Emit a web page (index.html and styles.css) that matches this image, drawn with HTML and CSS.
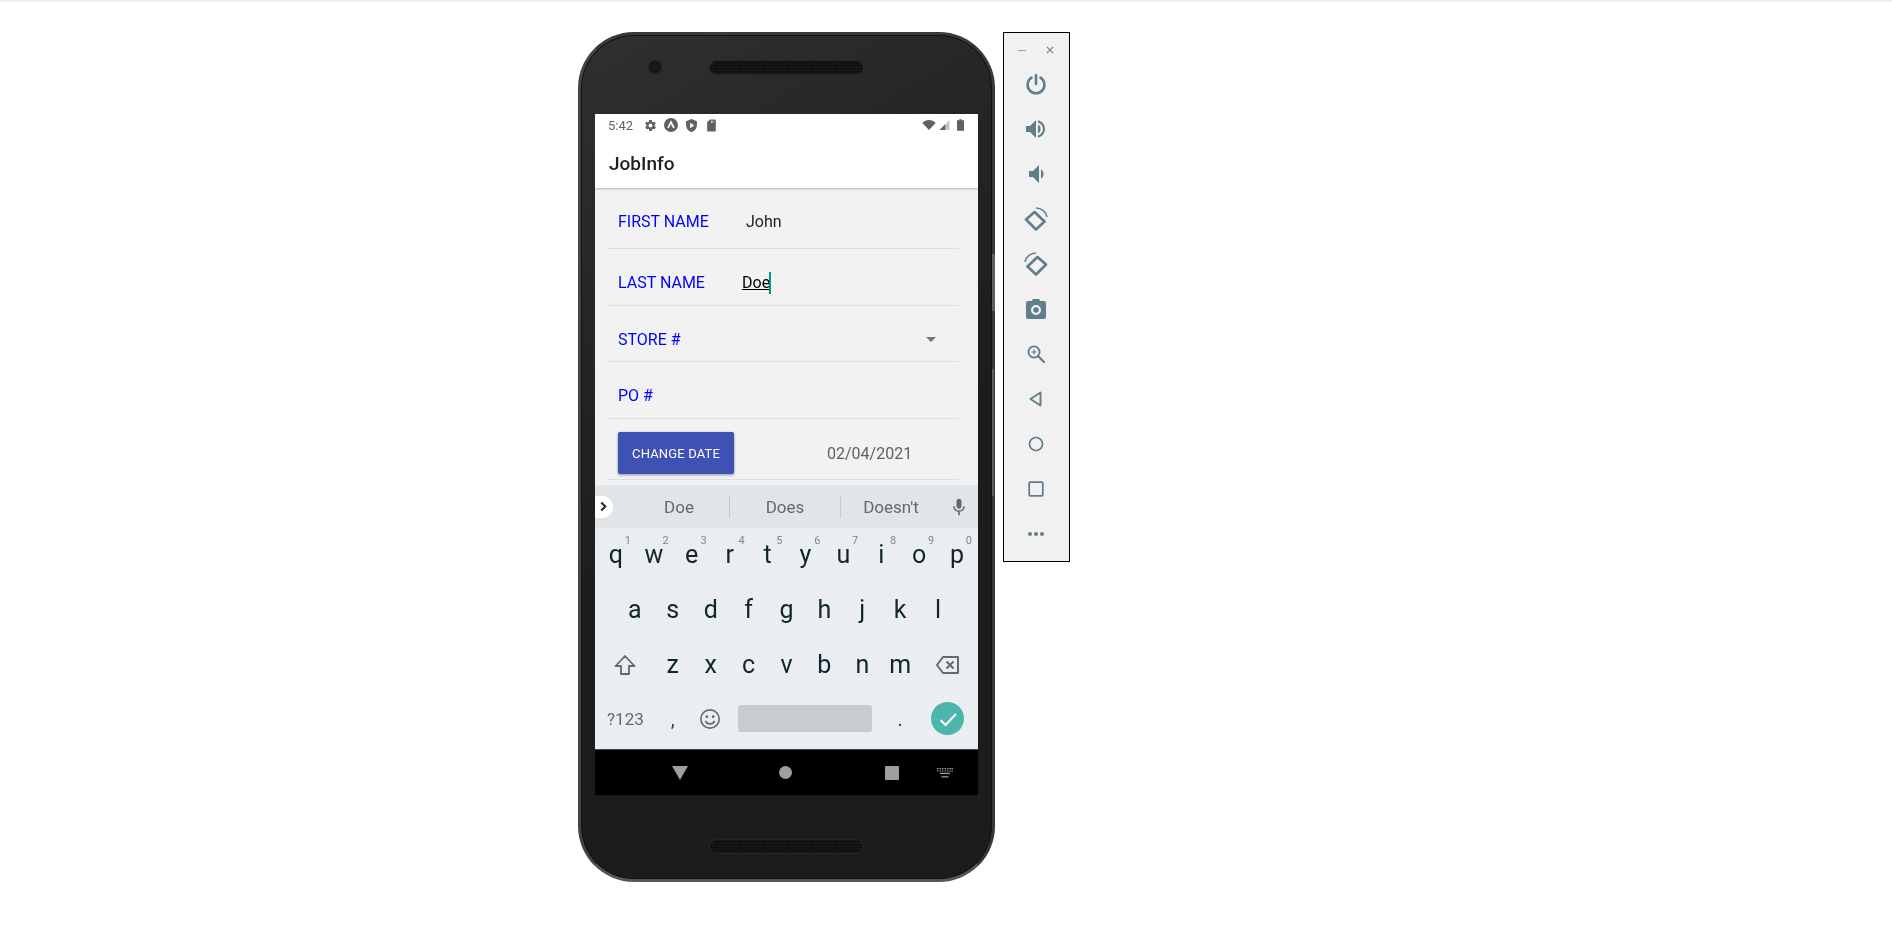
FILE: index.html
```html
<!DOCTYPE html>
<html lang="en">
<head>
  <meta charset="UTF-8">
  <title>JobInfo</title>
  <link rel="stylesheet" href="styles.css">
</head>
<body>

<div class="stage">

  <!-- PHONE -->
  <div class="phone">
    <span class="side-btn side-power"></span>
    <span class="side-btn side-volume"></span>
    <span class="camera"></span>
    <span class="speaker speaker-top"></span>
    <span class="speaker speaker-bottom"></span>

    <div class="screen">
      <div class="statusbar">
        <span class="clock">5:42</span>
        <svg class="st-icon" viewBox="0 0 24 24"><path fill="#616161" d="M19.4 13c0-.3.1-.6.1-1s0-.7-.1-1l2.1-1.6c.2-.2.2-.4.1-.6l-2-3.5c-.1-.2-.4-.3-.6-.2l-2.5 1c-.5-.4-1.1-.7-1.7-1l-.4-2.6c0-.3-.2-.5-.5-.5h-4c-.3 0-.5.2-.5.5l-.4 2.6c-.6.3-1.2.6-1.7 1l-2.5-1c-.2-.1-.5 0-.6.2l-2 3.5c-.1.2-.1.5.1.6L4.6 11c0 .3-.1.7-.1 1s0 .7.1 1l-2.1 1.6c-.2.2-.2.4-.1.6l2 3.5c.1.2.4.3.6.2l2.5-1c.5.4 1.1.7 1.7 1l.4 2.6c0 .3.2.5.5.5h4c.3 0 .5-.2.5-.5l.4-2.6c.6-.3 1.2-.6 1.7-1l2.5 1c.2.1.5 0 .6-.2l2-3.5c.1-.2.1-.5-.1-.6zM12 15.5a3.500 3.500 0 1 1 0-7 3.500 3.500 0 0 1 0 7z"/></svg>
        <svg class="st-icon st-round" viewBox="0 0 24 24"><circle cx="12" cy="12" r="12" fill="#616161"/><path fill="none" stroke="#fff" stroke-width="3" d="M7 17l5-10 5 10"/></svg>
        <svg class="st-icon" viewBox="0 0 24 24"><path fill="#616161" d="M12 0L2 4v7c0 6 4.200 11.500 10 13 5.800-1.500 10-7 10-13V4z"/><path fill="#fff" d="M9.500 7l7.500 5-7.500 5z"/></svg>
        <svg class="st-icon" viewBox="0 0 24 24"><path fill="#616161" d="M9 1h9c1.100 0 2 .9 2 2v18c0 1.100-.9 2-2 2H6c-1.100 0-2-.9-2-2V6z"/><path fill="#fff" d="M11 3h1.500v4H11zM14 3h1.500v4H14z"/></svg>
        <span class="status-gap"></span>
        <svg class="st-wifi" viewBox="0 0 16 12"><path fill="#616161" d="M0 3.500C2 1.500 5 0 8 0s6 1.500 8 3.500L8 12z"/></svg>
        <svg class="st-signal" viewBox="0 0 12 12"><path fill="#c4c4c4" d="M12 0v12H0z"/><path fill="#616161" d="M7 5v7H0z"/></svg>
        <svg class="st-battery" viewBox="0 0 8 13"><path fill="#616161" d="M2.500 0h3v1.200H8V13H0V1.200h2.500z"/></svg>
      </div>

      <div class="appbar">JobInfo</div>

      <div class="form">
        <div class="row row-first">
          <span class="label">FIRST NAME</span>
          <span class="value">John</span>
        </div>
        <div class="row row-last">
          <span class="label">LAST NAME</span>
          <span class="value value-edit"><u>Doe</u><i class="caret"></i></span>
        </div>
        <div class="row row-store">
          <span class="label">STORE #</span>
          <span class="dropdown"></span>
        </div>
        <div class="row row-po">
          <span class="label">PO #</span>
        </div>
        <div class="row row-date">
          <button class="date-btn">CHANGE DATE</button>
          <span class="date-value">02/04/2021</span>
        </div>
      </div>

      <div class="suggest">
        <span class="expand">
          <svg viewBox="0 0 10 12"><path fill="none" stroke="#263238" stroke-width="2.400" d="M2.500 1.500L7 6l-4.500 4.500"/></svg>
        </span>
        <span class="word word-1">Doe</span>
        <span class="word word-2">Does</span>
        <span class="word word-3">Doesn't</span>
        <svg class="mic" viewBox="0 0 24 24"><path fill="#5f6b71" d="M12 14c1.700 0 3-1.300 3-3V5c0-1.700-1.300-3-3-3S9 3.300 9 5v6c0 1.700 1.300 3 3 3zm5.300-3c0 3-2.500 5.100-5.300 5.100S6.700 14 6.700 11H5c0 3.400 2.700 6.200 6 6.700V22h2v-4.300c3.300-.5 6-3.300 6-6.700z"/></svg>
      </div>

      <div class="keys">
        <span class="key">q<sup>1</sup></span>
        <span class="key">w<sup>2</sup></span>
        <span class="key">e<sup>3</sup></span>
        <span class="key">r<sup>4</sup></span>
        <span class="key">t<sup>5</sup></span>
        <span class="key">y<sup>6</sup></span>
        <span class="key">u<sup>7</sup></span>
        <span class="key">i<sup>8</sup></span>
        <span class="key">o<sup>9</sup></span>
        <span class="key">p<sup>0</sup></span>

        <span class="key key-offset">a</span>
        <span class="key">s</span>
        <span class="key">d</span>
        <span class="key">f</span>
        <span class="key">g</span>
        <span class="key">h</span>
        <span class="key">j</span>
        <span class="key">k</span>
        <span class="key">l</span>

        <span class="key key-wide">
          <svg class="shift" viewBox="0 0 24 24"><path fill="none" stroke="#5f6b71" stroke-width="1.800" stroke-linejoin="round" d="M12 3L2.500 13H8v8h8v-8h5.500z"/></svg>
        </span>
        <span class="key">z</span>
        <span class="key">x</span>
        <span class="key">c</span>
        <span class="key">v</span>
        <span class="key">b</span>
        <span class="key">n</span>
        <span class="key">m</span>
        <span class="key key-wide">
          <svg class="backspace" viewBox="0 0 24 20"><path fill="none" stroke="#5f6b71" stroke-width="2" stroke-linejoin="round" d="M7 2h15v16H7l-6-8z"/><path fill="none" stroke="#5f6b71" stroke-width="2" d="M10.500 6.500l7 7m0-7l-7 7"/></svg>
        </span>

        <span class="key key-wide key-sym">?123</span>
        <span class="key key-comma">,</span>
        <span class="key key-emoji">
          <svg class="emoji" viewBox="0 0 24 24"><circle cx="12" cy="12" r="10" fill="none" stroke="#5f6b71" stroke-width="1.800"/><circle cx="8.500" cy="9.500" r="1.500" fill="#5f6b71"/><circle cx="15.500" cy="9.500" r="1.500" fill="#5f6b71"/><path fill="none" stroke="#5f6b71" stroke-width="1.800" d="M7 14c1 2.200 3 3.300 5 3.300s4-1.100 5-3.300"/></svg>
        </span>
        <span class="key key-space"><i></i></span>
        <span class="key key-dot">.</span>
        <span class="key key-wide key-enter">
          <span class="enter">
            <svg viewBox="0 0 24 24"><path fill="none" stroke="#fff" stroke-width="2" d="M4.500 13l5 5L20 7"/></svg>
          </span>
        </span>
      </div>

      <div class="navbar">
        <svg class="nav-back" viewBox="0 0 16 14"><path fill="#9e9e9e" d="M0 0h16L8 14z"/></svg>
        <span class="nav-home"></span>
        <span class="nav-recent"></span>
        <svg class="nav-kbd" viewBox="0 0 16 10"><path fill="#9e9e9e" d="M0 0h1.500v1.200H0zM2.500 0H4v1.200H2.500zM5 0h1.500v1.200H5zM7.500 0H9v1.200H7.500zM10 0h1.500v1.200H10zM12.500 0H14v1.200h-1.500zM14.500 0H16v1.200h-1.500zM0 2.400h1.500v1.200H0zM2.500 2.400H4v1.200H2.500zM5 2.400h1.500v1.200H5zM7.500 2.400H9v1.200H7.500zM10 2.400h1.500v1.200H10zM12.500 2.400H14v1.200h-1.500zM14.500 2.400H16v1.200h-1.500zM3 4.800h10V6H3zM4.500 8.200h7v1.300h-7z"/></svg>
      </div>
    </div>
  </div>

  <!-- EMULATOR TOOLBAR -->
  <div class="toolbar">
    <div class="win-controls">
      <span class="win-min"></span>
      <svg class="win-close" viewBox="0 0 8 8"><path fill="none" stroke="#6f8791" stroke-width="1.200" d="M.8.800l6.400 6.400m0-6.400L.8 7.200"/></svg>
    </div>
    <svg class="tool" viewBox="0 0 24 24"><path fill="none" stroke="#607d8b" stroke-width="2.600" stroke-linecap="round" d="M12 3v9M7.500 5.700a8.400 8.400 0 1 0 9 0"/></svg>
    <svg class="tool" viewBox="0 0 24 24"><path fill="#607d8b" d="M2 9v6h4l6 6V3L6 9zM14 7.500v9c1.500-.8 2.500-2.500 2.500-4.500S15.500 8.300 14 7.500z"/><path fill="#607d8b" d="M14 3.300v2.100c2.900.9 5 3.500 5 6.600s-2.100 5.700-5 6.600v2.100c4-.9 7-4.500 7-8.700s-3-7.800-7-8.700z"/></svg>
    <svg class="tool" viewBox="0 0 24 24"><path fill="#607d8b" d="M5 9v6h4l6 6V3L9 9zM17 7.500v9c1.500-.8 2.500-2.500 2.500-4.500S18.500 8.300 17 7.500z"/></svg>
    <svg class="tool" viewBox="0 0 24 24"><path fill="none" stroke="#607d8b" stroke-width="2.600" stroke-linejoin="round" d="M2 12.500L10.500 5l10 9.500-8.500 8z"/><path fill="none" stroke="#607d8b" stroke-width="1.500" d="M12 1c5 0 10 3.500 11 9"/></svg>
    <svg class="tool" viewBox="0 0 24 24"><path fill="none" stroke="#607d8b" stroke-width="2.600" stroke-linejoin="round" d="M22 12.500L13.500 5l-10 9.500 8.500 8z"/><path fill="none" stroke="#607d8b" stroke-width="1.500" d="M12 1C7 1 2 4.500 1 10"/></svg>
    <svg class="tool" viewBox="0 0 24 24"><path fill="#607d8b" fill-rule="evenodd" d="M9 2L7.800 4H4C2.900 4 2 4.900 2 6v14c0 1.100.9 2 2 2h16c1.100 0 2-.9 2-2V6c0-1.100-.9-2-2-2h-3.800L15 2zM12 8a5 5 0 1 1 0 10 5 5 0 0 1 0-10zm0 2.200a2.800 2.800 0 1 0 0 5.600 2.800 2.800 0 0 0 0-5.600z"/></svg>
    <svg class="tool" viewBox="0 0 24 24"><circle cx="10" cy="10" r="5.600" fill="none" stroke="#607d8b" stroke-width="1.800"/><path fill="none" stroke="#607d8b" stroke-width="2.200" stroke-linecap="round" d="M14.500 14.500l5.500 5.500"/><path fill="none" stroke="#607d8b" stroke-width="1.200" d="M10 7.500v5M7.500 10h5"/></svg>
    <svg class="tool" viewBox="0 0 24 24"><path fill="none" stroke="#607d8b" stroke-width="1.900" stroke-linejoin="round" d="M16.500 5.500v13L6.500 12z"/></svg>
    <svg class="tool" viewBox="0 0 24 24"><circle cx="12" cy="12" r="6.500" fill="none" stroke="#607d8b" stroke-width="1.700"/></svg>
    <svg class="tool" viewBox="0 0 24 24"><rect x="5.200" y="5.200" width="13.600" height="13.600" rx="1" fill="none" stroke="#607d8b" stroke-width="1.700"/></svg>
    <svg class="tool" viewBox="0 0 24 24"><circle cx="6" cy="12" r="2" fill="#607d8b"/><circle cx="12" cy="12" r="2" fill="#607d8b"/><circle cx="18" cy="12" r="2" fill="#607d8b"/></svg>
  </div>

</div>

</body>
</html>
```

FILE: styles.css
```css
* {
    box-sizing: border-box;
}

html, body {
    margin: 0;
    height: 100%;
    background-color: #fff;
    overflow: hidden;
}

body {
    font-family: Roboto, "Liberation Sans", sans-serif;
    border-top: 2px solid #efefef;
}

.stage {
    display: flex;
    align-items: flex-start;
    gap: 8px;
    padding: 30px 0 0 578px;
}

/* phone body */
.phone {
    position: relative;
    flex: none;
    width: 417px;
    height: 850px;
    padding: 79px 14px 0 14px;
    border-radius: 56px;
    border: 3px solid #444;
    border-top-color: #3a3a3a;
    border-right-color: #383838;
    border-bottom-color: #555;
    background: linear-gradient(150deg, #303030 0%, #262626 25%, #1c1c1c 55%);
    box-shadow: inset 0 0 0 1px #111;
}

.side-btn {
    position: absolute;
    left: 100%;
    background-color: #5f5f5f;
}

.side-power {
    top: 219px;
    width: 3px;
    height: 57px;
}

.side-volume {
    top: 334px;
    width: 2px;
    height: 127px;
}

.camera {
    position: absolute;
    left: 67px;
    top: 25px;
    width: 14px;
    height: 14px;
    border-radius: 50%;
    background: radial-gradient(circle, #1c1c26 0%, #131316 50%, #2a2a2a 80%);
}

.speaker {
    position: absolute;
    left: 129px;
    width: 153px;
    height: 13px;
    border-radius: 7px;
    background-color: #161616;
    background-image: radial-gradient(circle, #080808 40%, transparent 50%);
    background-size: 3px 3px;
    box-shadow: 0 0 0 1px #262626;
}

.speaker-top {
    top: 26px;
}

.speaker-bottom {
    bottom: 26px;
}

/* screen */
.screen {
    display: flex;
    flex-direction: column;
    width: 383px;
    height: 681px;
    background-color: #f2f2f2;
    overflow: hidden;
    filter: blur(0.35px);
}

.statusbar {
    position: relative;
    z-index: 1;
    display: flex;
    align-items: center;
    flex: none;
    height: 22px;
    padding: 0 14px 0 13px;
    background-color: #fff;
    font-size: 13px;
    color: #616161;
}

.clock {
    width: 33px;
    margin-right: 3px;
}

.st-icon {
    width: 13px;
    height: 13px;
    margin-right: 7px;
}

.st-round {
    width: 14px;
    height: 14px;
}

.status-gap {
    flex: 1;
}

.st-wifi {
    width: 14px;
    height: 10px;
}

.st-signal {
    width: 11px;
    height: 10px;
    margin-left: 3px;
}

.st-battery {
    width: 7px;
    height: 12px;
    margin-left: 7px;
}

.appbar {
    position: relative;
    flex: none;
    height: 52px;
    padding: 10px 0 0 14px;
    background-color: #fff;
    font-size: 19px;
    font-weight: 500;
    line-height: 36px;
    color: #212121;
    box-shadow: 0 1px 2px rgba(0, 0, 0, 0.25);
}

/* form */
.form {
    flex: 1;
    padding: 0 19px 0 13px;
}

.row {
    display: flex;
    align-items: center;
    padding-left: 10px;
    border-bottom: 1px solid #dedede;
    font-size: 16px;
}

.row-first {
    height: 61px;
    padding-top: 6px;
}

.row-last {
    height: 57px;
    padding-top: 11px;
}

.row-store {
    height: 56px;
    padding-top: 11px;
}

.row-po {
    height: 57px;
    padding-top: 10px;
}

.row-date {
    height: 61px;
    padding-top: 8px;
}

.label {
    color: #0000ff;
    white-space: nowrap;
}

.row-first .label {
    width: 128px;
}

.row-last .label {
    width: 124px;
}

.value {
    color: #212121;
}

.value-edit {
    display: flex;
    align-items: center;
    color: #000;
}

.caret {
    width: 2px;
    height: 22px;
    margin-left: -1px;
    background-color: #009688;
}

.dropdown {
    width: 0;
    height: 0;
    margin-left: auto;
    margin-right: 23px;
    border-left: 5px solid transparent;
    border-right: 5px solid transparent;
    border-top: 5px solid #757575;
}

.date-btn {
    width: 116px;
    height: 42px;
    padding: 0;
    border: none;
    border-radius: 2px;
    background-color: #3f51b5;
    color: #fff;
    font-family: inherit;
    font-size: 13px;
    letter-spacing: 0.15px;
    box-shadow: 0 1px 3px rgba(0, 0, 0, 0.4);
}

.date-value {
    margin-left: 93px;
    color: #616161;
}

/* keyboard */
.suggest {
    display: flex;
    align-items: center;
    flex: none;
    height: 43px;
    background-color: #e2e5e8;
    font-size: 17px;
    color: #5f6b71;
}

.expand {
    display: flex;
    align-items: center;
    justify-content: flex-end;
    width: 18px;
    height: 22px;
    padding-right: 5px;
    border-radius: 0 11px 11px 0;
    background-color: #fff;
    margin-right: 16px;
}

.expand svg {
    width: 9px;
    height: 11px;
}

.word {
    text-align: center;
    line-height: 22px;
}

.word-1 {
    width: 100px;
}

.word-2 {
    width: 112px;
    border-left: 1px solid #c4c8cb;
    border-right: 1px solid #c4c8cb;
}

.word-3 {
    width: 100px;
}

.mic {
    width: 20px;
    height: 20px;
    margin-left: 8px;
}

.keys {
    display: grid;
    flex: none;
    grid-template-columns: repeat(20, 1fr);
    grid-template-rows: 55px 55px 55px 53px;
    height: 222px;
    padding: 0 2px;
    background-color: #ebeef1;
    font-size: 25px;
    color: #10252e;
    border-bottom: 1px solid #41464a;
}

.key {
    position: relative;
    display: flex;
    align-items: center;
    justify-content: center;
    grid-column: span 2;
    padding-bottom: 2px;
}

.key sup {
    position: absolute;
    top: 6px;
    right: 4px;
    font-size: 11px;
    line-height: 13px;
    color: #7d878c;
}

.key-offset {
    grid-column: 2 / span 2;
}

.key-wide {
    grid-column: span 3;
}

.key-sym {
    font-size: 17px;
    color: #5f6b71;
}

.key-comma,
.key-dot {
    font-size: 20px;
    color: #37474f;
}

.key-space {
    grid-column: span 8;
}

.key-space i {
    width: 134px;
    height: 27px;
    border-radius: 3px;
    background-color: #c8ccce;
}

.shift {
    width: 24px;
    height: 24px;
}

.backspace {
    width: 24px;
    height: 20px;
}

.emoji {
    width: 22px;
    height: 22px;
    margin-left: -1px;
}

.key-enter {
    justify-content: flex-end;
}

.enter {
    display: flex;
    align-items: center;
    justify-content: center;
    width: 33px;
    height: 33px;
    margin-right: 12px;
    border-radius: 50%;
    background-color: #4db6ac;
}

.enter svg {
    width: 24px;
    height: 24px;
}

/* nav bar */
.navbar {
    display: flex;
    align-items: center;
    flex: none;
    height: 45px;
    padding-left: 77px;
    background-color: #000;
}

.nav-back {
    width: 16px;
    height: 14px;
}

.nav-home {
    width: 13px;
    height: 13px;
    margin-left: 91px;
    border-radius: 50%;
    background-color: #9e9e9e;
}

.nav-recent {
    width: 14px;
    height: 14px;
    margin-left: 93px;
    border-radius: 1px;
    background-color: #9e9e9e;
}

.nav-kbd {
    width: 16px;
    height: 10px;
    margin-left: 38px;
}

/* emulator toolbar */
.toolbar {
    display: flex;
    flex-direction: column;
    align-items: center;
    flex: none;
    width: 67px;
    height: 530px;
    padding-right: 1px;
    gap: 21px;
    border: 1px solid #000;
    background-color: #f1f1f1;
}

.win-controls {
    display: flex;
    align-items: center;
    justify-content: space-between;
    width: 100%;
    height: 14px;
    margin-top: 10px;
    margin-bottom: -6px;
    padding: 0 14px;
}

.win-min {
    width: 8px;
    height: 1px;
    background-color: #8fa3ac;
}

.win-close {
    width: 8px;
    height: 8px;
}

.tool {
    flex: none;
    width: 24px;
    height: 24px;
}
```
